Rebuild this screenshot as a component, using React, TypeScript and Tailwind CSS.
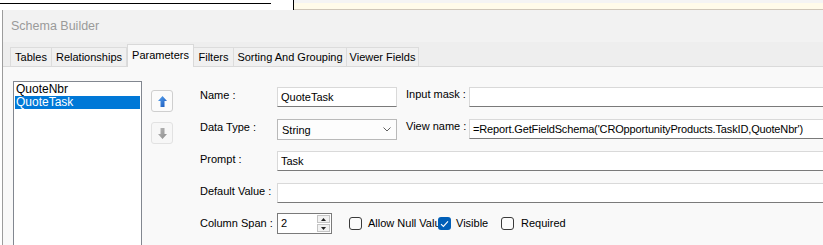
const font = "font-['Liberation_Sans',Arial,sans-serif]";

const tabs = [
  { label: "Tables", w: "w-[42px]" },
  { label: "Relationships", w: "w-[75px]" },
  { label: "Parameters", w: "w-[67px]", active: true },
  { label: "Filters", w: "w-[40px]" },
  { label: "Sorting And Grouping", w: "w-[113px]" },
  { label: "Viewer Fields", w: "w-[72px]" },
];

function ArrowUp({ disabled }: { disabled?: boolean }) {
  return (
    <svg width="9" height="11" viewBox="0 0 9 11">
      <defs>
        <linearGradient id={disabled ? "gd" : "gu"} x1="0" y1="0" x2="1" y2="1">
          <stop offset="0" stopColor={disabled ? "#b8b8b8" : "#5aa6f2"} />
          <stop offset="1" stopColor={disabled ? "#8c8c8c" : "#1553b8"} />
        </linearGradient>
      </defs>
      <path
        d={disabled ? "M4.5 11 L9 6 L6.5 6 L6.5 0 L2.5 0 L2.5 6 L0 6 Z" : "M4.5 0 L9 5 L6.5 5 L6.5 11 L2.5 11 L2.5 5 L0 5 Z"}
        fill={`url(#${disabled ? "gd" : "gu"})`}
      />
    </svg>
  );
}

function TextBox({ value, className = "" }: { value?: string; className?: string }) {
  return (
    <div
      className={`h-[20px] border border-[#d9d9d9] border-b-[#7a7a7a] bg-white px-[3px] text-[11px] leading-[18px] text-black whitespace-nowrap overflow-hidden ${className}`}
    >
      {value}
    </div>
  );
}

function Label({ text, className = "w-[77px]" }: { text: string; className?: string }) {
  return <div className={`${className} shrink-0 text-[11px] leading-[16px] text-black whitespace-nowrap`}>{text}</div>;
}

function CheckBox({ checked }: { checked?: boolean }) {
  return checked ? (
    <div className="w-[13px] h-[13px] shrink-0 rounded-[3px] bg-[#005fb8] flex items-center justify-center">
      <svg width="9" height="8" viewBox="0 0 9 8">
        <path d="M1 4.2 L3.4 6.4 L8 1.4" fill="none" stroke="white" strokeWidth="1.1" />
      </svg>
    </div>
  ) : (
    <div className="w-[13px] h-[13px] shrink-0 rounded-[3px] border border-[#3a3a3a] bg-[#fbfbfb]" />
  );
}

export default function App() {
  return (
    <div className={`w-[823px] h-[245px] overflow-hidden bg-white flex flex-col ${font}`}>
      {/* what lies behind the dialog */}
      <div className="h-[10px] flex shrink-0">
        <div className="w-[293px] bg-white">
          <div className="mt-[3px] h-px w-[271px] bg-black" />
        </div>
        <div className="w-px bg-black" />
        <div className="flex-1 bg-[#f4f4f4] pt-[3px] flex flex-col">
          <div className="flex-1 bg-[#fffbea] border-b border-[#cfc6b8]" />
        </div>
      </div>

      <div className="flex flex-1 min-h-0">
        <div className="w-[3px] bg-white border-r border-[#9c9c9c]" />

        <div className="flex-1 flex flex-col bg-[#f2f2f2] min-w-0">
          <div className="h-[32px] shrink-0 flex items-center pl-[8px] text-[12.5px] text-[#9a9a9a]">Schema Builder</div>

          <div className="h-[24px] shrink-0 flex items-end pl-[7px] bg-[#eeeeee]">
            {tabs.map((t) =>
              t.active ? (
                <div
                  key={t.label}
                  className={`${t.w} h-[23px] -mb-px z-10 border border-b-0 border-[#d9d9d9] bg-[#f9f9f9] text-[11px] text-black flex items-start justify-center pt-[2px]`}
                >
                  {t.label}
                </div>
              ) : (
                <div
                  key={t.label}
                  className={`${t.w} h-[19px] border border-b-0 border-l-0 first:border-l border-[#dcdcdc] bg-[#f0f0f0] text-[11px] text-black flex items-center justify-center whitespace-nowrap`}
                >
                  {t.label}
                </div>
              )
            )}
          </div>

          <div className="flex-1 flex bg-[#f9f9f9] border-t border-[#dadada] pt-[14px] pl-[10px] min-h-0">
            <div className="w-[129px] h-[180px] shrink-0 border border-[#828790] bg-white p-[1px]">
              <div className="h-[13px] pl-[1px] text-[12px] leading-[13px] text-black">QuoteNbr</div>
              <div className="h-[13px] pl-[1px] text-[12px] leading-[13px] text-white bg-[#0078d7]">QuoteTask</div>
            </div>

            <div className="ml-[9px] mt-[9px] flex flex-col gap-[10px] shrink-0">
              <div className="w-[22px] h-[22px] rounded-[3px] border border-[#cfcfcf] bg-[#fbfbfb] flex items-center justify-center">
                <ArrowUp />
              </div>
              <div className="w-[22px] h-[22px] rounded-[3px] border border-[#e2e2e2] bg-[#f7f7f7] flex items-center justify-center">
                <ArrowUp disabled />
              </div>
            </div>

            <div className="ml-[27px] mt-[6px] w-[660px] shrink-0 flex flex-col">
              <div className="flex items-start">
                <Label text="Name :" />
                <TextBox value="QuoteTask" className="w-[120px]" />
                <Label text="Input mask :" className="w-[63px] ml-[9px] -mt-[1px]" />
                <TextBox className="flex-1" />
              </div>

              <div className="flex items-start mt-[12px]">
                <Label text="Data Type :" />
                <div className="w-[120px] h-[21px] border border-[#b9b9b9] bg-[#fdfdfd] pl-[4px] pr-[5px] flex items-center justify-between text-[11px] text-black">
                  <span className="pt-[1px]">String</span>
                  <svg width="8" height="5" viewBox="0 0 8 5">
                    <path d="M0.5 0.5 L4 4 L7.5 0.5" fill="none" stroke="#606060" strokeWidth="1" />
                  </svg>
                </div>
                <Label text="View name :" className="w-[63px] ml-[9px] -mt-[1px]" />
                <TextBox value="=Report.GetFieldSchema('CROpportunityProducts.TaskID,QuoteNbr')" className="flex-1 tracking-[-0.15px]" />
              </div>

              <div className="flex items-start mt-[11px]">
                <Label text="Prompt :" />
                <TextBox value="Task" className="flex-1" />
              </div>

              <div className="flex items-start mt-[12px]">
                <Label text="Default Value :" />
                <TextBox className="flex-1" />
              </div>

              <div className="flex items-center mt-[10px]">
                <Label text="Column Span :" className="w-[77px] -mt-[2px]" />
                <div className="w-[55px] h-[21px] border border-[#7a7a7a] bg-white flex items-center justify-between pl-[3px] pr-[1px] text-[11px] text-black">
                  <span>2</span>
                  <div className="flex flex-col gap-px">
                    <div className="w-[13px] h-[8px] border border-[#c4c4c4] bg-[#f2f2f2] flex items-center justify-center">
                      <svg width="5" height="3" viewBox="0 0 5 3"><path d="M2.5 0 L5 3 L0 3 Z" fill="#222" /></svg>
                    </div>
                    <div className="w-[13px] h-[8px] border border-[#c4c4c4] bg-[#f2f2f2] flex items-center justify-center">
                      <svg width="5" height="3" viewBox="0 0 5 3"><path d="M0 0 L5 0 L2.5 3 Z" fill="#222" /></svg>
                    </div>
                  </div>
                </div>

                <div className="ml-[17px] w-[89px] flex items-center gap-[6px] overflow-hidden shrink-0">
                  <CheckBox />
                  <span className="text-[11px] text-black whitespace-nowrap">Allow Null Values</span>
                </div>
                <div className="w-[63px] flex items-center gap-[5px] shrink-0">
                  <CheckBox checked />
                  <span className="text-[11px] text-black">Visible</span>
                </div>
                <div className="flex items-center gap-[7px]">
                  <CheckBox />
                  <span className="text-[11px] text-black">Required</span>
                </div>
              </div>
            </div>
          </div>
        </div>
      </div>
    </div>
  );
}
